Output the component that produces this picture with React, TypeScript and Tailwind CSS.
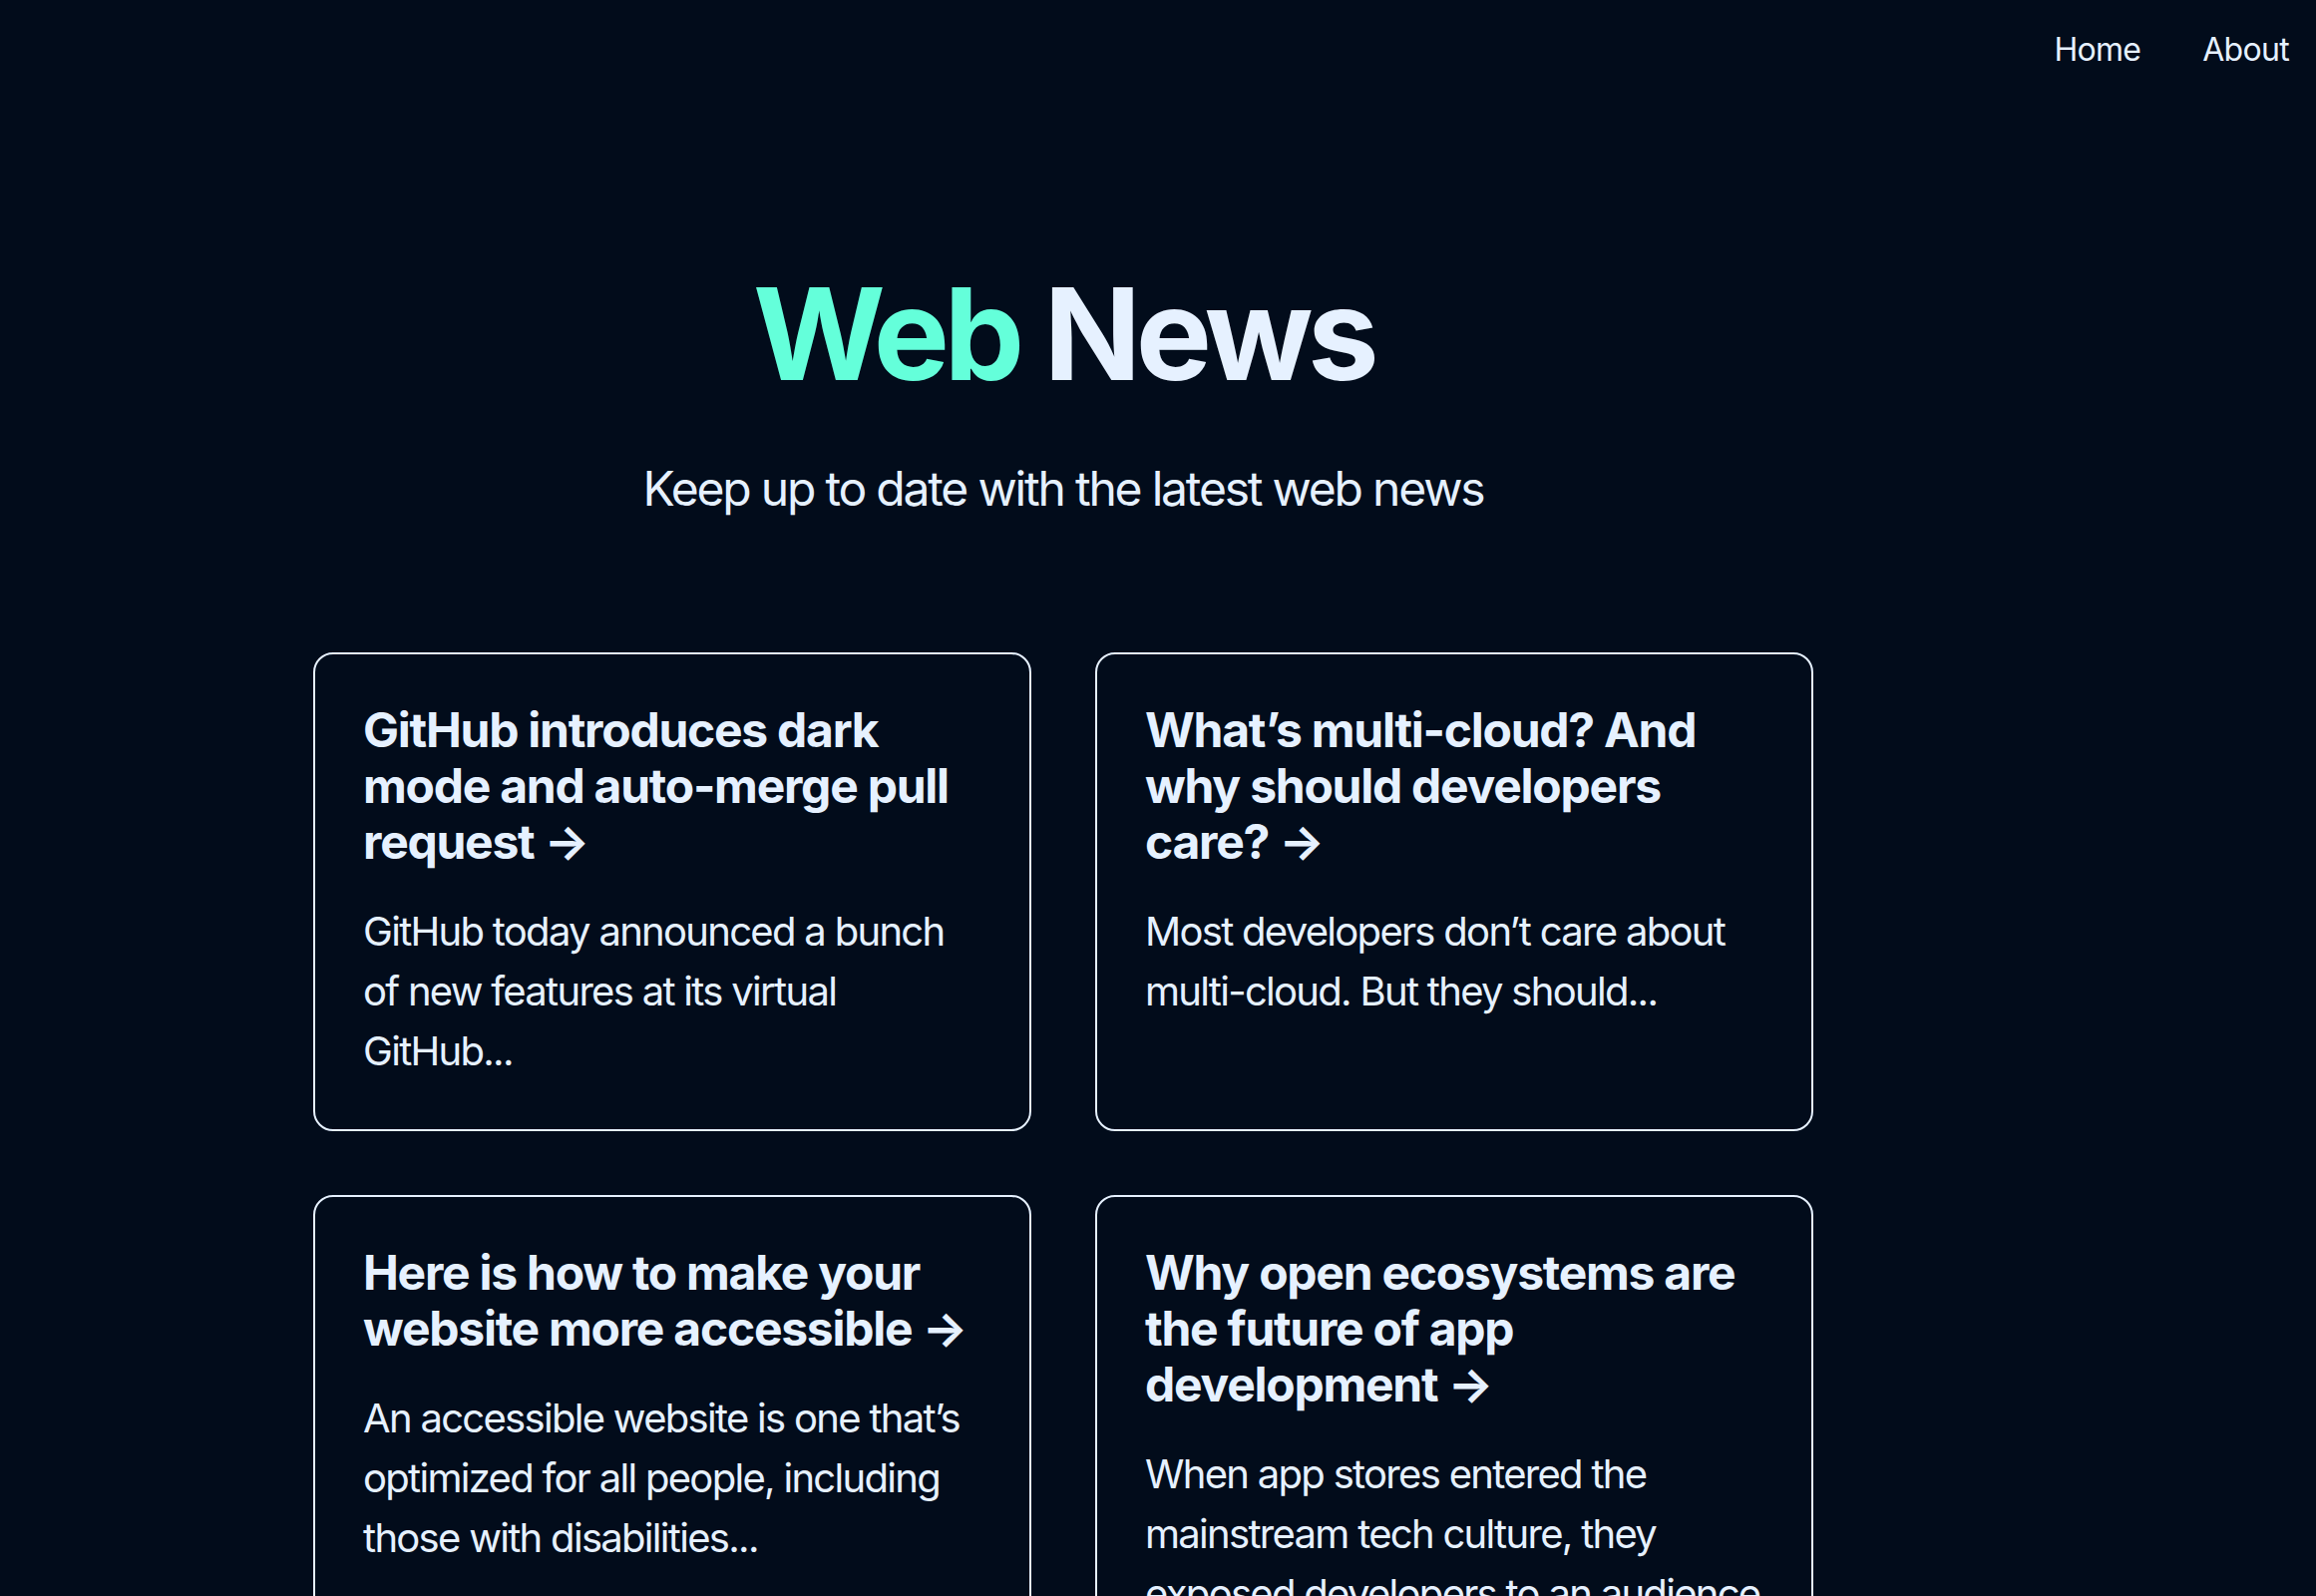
import React from "react";

const cards = [
  {
    title: "GitHub introduces dark mode and auto-merge pull request →",
    body: "GitHub today announced a bunch of new features at its virtual GitHub...",
  },
  {
    title: "What’s multi-cloud? And why should developers care? →",
    body: "Most developers don’t care about multi-cloud. But they should...",
  },
  {
    title: "Here is how to make your website more accessible →",
    body: "An accessible website is one that’s optimized for all people, including those with disabilities...",
  },
  {
    title: "Why open ecosystems are the future of app development →",
    body: "When app stores entered the mainstream tech culture, they exposed developers to an audience of billions...",
  },
];

export default function App() {
  return (
    <div
      className="min-h-screen w-full bg-[#020c1b] text-[#e6f1ff]"
      style={{ fontFamily: "Inter, 'Noto Sans', sans-serif" }}
    >
      <nav className="flex justify-end gap-[62px] pr-[27px] pt-[26px] text-[32px] leading-[48px] tracking-[-0.7px]">
        <a href="#" className="text-[#e6f1ff]">Home</a>
        <a href="#" className="text-[#e6f1ff]">About</a>
      </nav>
      <main className="flex w-[2132px] flex-col items-center pb-[160px] pt-[187px]">
        <h1 className="m-0 text-[128px] font-bold leading-[147px] tracking-[-5.5px]">
          <span className="text-[#64ffda]">Web</span> News
        </h1>
        <p className="mt-[46px] text-[48px] leading-[72px] tracking-[-2.2px]">
          Keep up to date with the latest web news
        </p>
        <div className="mt-[128px] grid grid-cols-[720px_720px] gap-x-[64px] gap-y-[64px]">
          {cards.map((c) => (
            <a
              key={c.title}
              href="#"
              className="block rounded-[20px] border-2 border-[#e6f1ff] p-[48px] text-[#e6f1ff]"
            >
              <h3 className="mb-[32px] text-[48px] font-bold leading-[56px] tracking-[-1.25px]">{c.title}</h3>
              <p className="text-[40px] leading-[60px] tracking-[-1.7px]">{c.body}</p>
            </a>
          ))}
        </div>
      </main>
    </div>
  );
}
